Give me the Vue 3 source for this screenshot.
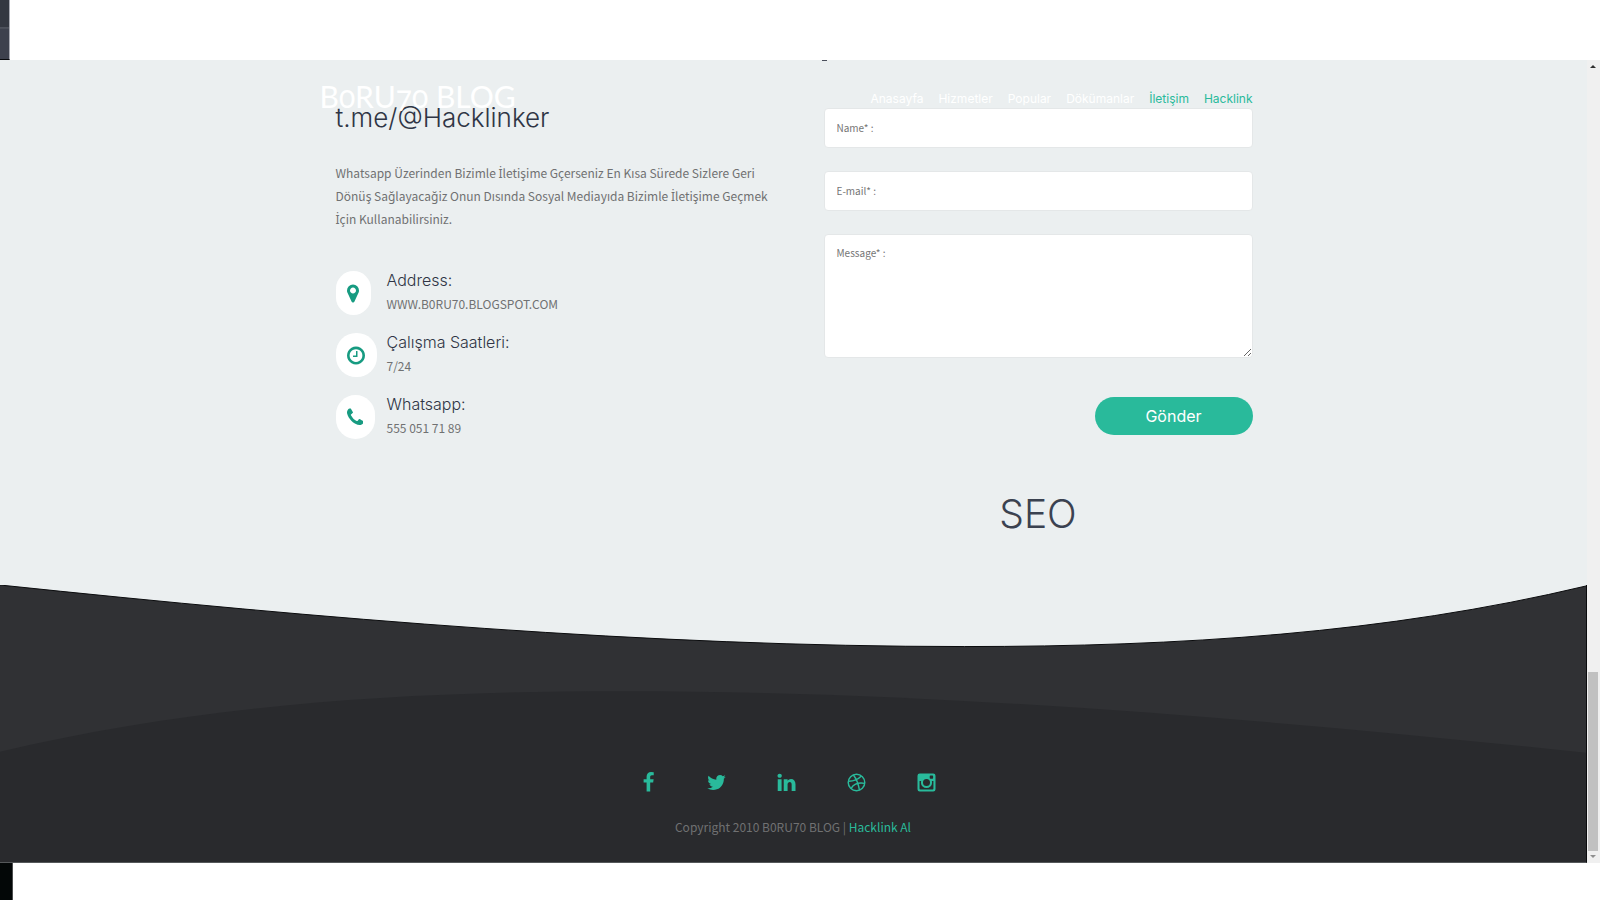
<script setup>
import { ref } from 'vue'

const navLinks = [
  { label: 'Anasayfa' },
  { label: 'Hizmetler' },
  { label: 'Popular' },
  { label: 'Dökümanlar' },
  { label: 'İletişim', accent: true },
  { label: 'Hacklink', accent: true },
]

const contacts = [
  {
    kind: 'marker',
    title: 'Address:',
    text: 'WWW.B0RU70.BLOGSPOT.COM',
    box: '384 0 1024 1792',
    path: 'M1152 640q0-106-75-181t-181-75-181 75-75 181 75 181 181 75 181-75 75-181zm256 0q0 109-33 179l-364 774q-16 33-47.500 52t-67.500 19-67.500-19-46.500-52l-365-774q-33-70-33-179 0-212 150-362t362-150 362 150 150 362z',
  },
  {
    kind: 'clock',
    title: 'Çalışma Saatleri:',
    text: '7/24',
    box: '128 0 1536 1792',
    path: 'M1024 544v448q0 14-9 23t-23 9h-320q-14 0-23-9t-9-23v-64q0-14 9-23t23-9h224v-352q0-14 9-23t23-9h64q14 0 23 9t9 23zm416 352q0-148-73-273t-198-198-273-73-273 73-198 198-73 273 73 273 198 198 273 73 273-73 198-198 73-273zm224 0q0 209-103 385.500t-279.500 279.500-385.500 103-385.500-103-279.500-279.500-103-385.500 103-385.500 279.500-279.500 385.500-103 385.500 103 279.500 279.500 103 385.500z',
  },
  {
    kind: 'phone',
    title: 'Whatsapp:',
    text: '555 051 71 89',
    box: '192 0 1408 1792',
    path: 'M1600 1240q0 27-10 70.500t-21 68.500q-21 50-122 106-94 51-186 51-27 0-52.500-3.500t-57.500-12.500-47.500-14.500-55.500-20.500-49-18q-98-35-175-83-128-79-264.500-215.500t-215.500-264.500q-48-77-83-175-3-9-18-49t-20.500-55.500-14.500-47.500-12.500-57.500-3.500-52.500q0-92 51-186 56-101 106-122 25-11 68.500-21t70.500-10q14 0 21 3 18 6 53 76 11 19 30 54t35 63.500 31 53.500q3 4 17.500 25t21.500 35.500 7 28.500q0 20-28.500 50t-62 55-62 53-28.500 46q0 9 5 22.500t8.500 20.500 14 24 11.500 19q76 137 174 235t235 174q2 1 19 11.500t24 14 20.500 8.500 22.500 5q18 0 46-28.500t53-62 55-62 50-28.500q14 0 28.500 7t35.500 21.500 25 17.500q25 15 53.500 31t63.500 35 54 30q70 35 76 53 3 7 3 21z',
  },
]

const name = ref('')
const email = ref('')
const message = ref('')
</script>

<template>
  <div class="desktop">
    <div class="strip strip-top"><span class="window-edge"></span></div>
    <div class="browser">
      <div class="page">
        <header class="header">
          <div class="container header-row">
            <a class="brand" href="#">B0RU70 BLOG</a>
            <nav class="nav">
              <a v-for="l in navLinks" :key="l.label" href="#" :class="{ accent: l.accent }">{{ l.label }}</a>
            </nav>
          </div>
        </header>
        <span class="cut-mark"></span>

        <main class="main">
          <div class="container columns">
            <section class="info">
              <h2>t.me/@Hacklinker</h2>
              <p class="lead">
                Whatsapp Üzerinden Bizimle <span class="dotted">İ</span>letişime Gçerseniz En Kısa Sürede Sizlere Geri
                Dönüş Sağlayacağiz Onun Dısında Sosyal Mediayıda Bizimle <span class="dotted">İ</span>letişime Geçmek
                <span class="dotted">İ</span>çin Kullanabilirsiniz.
              </p>
              <ul class="contacts">
                <li v-for="c in contacts" :key="c.kind">
                  <div class="slot">
                    <span class="pill" :class="c.kind">
                      <svg :viewBox="c.box" aria-hidden="true"><path :d="c.path" /></svg>
                    </span>
                  </div>
                  <div>
                    <h3>{{ c.title }}</h3>
                    <p>{{ c.text }}</p>
                  </div>
                </li>
              </ul>
            </section>

            <section class="contact">
              <form class="form" @submit.prevent>
                <input v-model="name" type="text" placeholder="Name* :" aria-label="Name" />
                <input v-model="email" type="email" placeholder="E-mail* :" aria-label="E-mail" />
                <textarea v-model="message" placeholder="Message* :" aria-label="Message"></textarea>
                <button type="submit">Gönder</button>
              </form>
              <h1>SEO</h1>
            </section>
          </div>
        </main>

        <footer class="footer">
          <svg class="waves" viewBox="0 0 1587 279" preserveAspectRatio="none" aria-hidden="true">
            <path
              d="M0 0C322 34 650 62 965 62C1180 62 1387 49 1587 1V279H0Z"
              fill="#303134"
            />
            <path d="M0 168C200 120 407 107 622 107C937 107 1265 135 1587 169V279H0Z" fill="#292a2d" />
            <path
              d="M0 0C322 34 650 62 965 62C1180 62 1387 49 1587 1"
              fill="none"
              stroke="#0a0b0d"
              vector-effect="non-scaling-stroke"
            />
          </svg>
          <div class="social">
            <a href="#" aria-label="Facebook">
              <svg class="slim" viewBox="192 0 1408 1792"><path d="M1343 12v264h-157q-86 0-116 36t-30 108v189h293l-39 296h-254v759h-306v-759h-255v-296h255v-218q0-186 104-288.500t277-102.500q147 0 228 12z" /></svg>
            </a>
            <a href="#" aria-label="Twitter">
              <svg viewBox="0 0 1792 1792"><path d="M1684 408q-67 98-162 167 1 14 1 42 0 130-38 259.500t-115.500 248.500-184.500 210.500-258 146-323 54.500q-271 0-496-145 35 4 78 4 225 0 401-138-105-2-188-64.500t-114-159.500q33 5 61 5 43 0 85-11-112-23-185.500-111.500t-73.500-205.500v-4q68 38 146 41-66-44-105-115t-39-154q0-88 44-163 121 149 294.500 238.500t371.500 99.500q-8-38-8-74 0-134 94.500-228.500t228.500-94.500q140 0 236 102 109-21 205-78-37 115-142 178 93-10 186-50z" /></svg>
            </a>
            <a href="#" aria-label="LinkedIn">
              <svg viewBox="0 0 1792 1792"><path d="M477 625v991h-330v-991h330zm21-306q1 73-50.500 122t-135.500 49h-2q-82 0-132-49t-50-122q0-74 51.500-122.500t134.500-48.500 133 48.500 51 122.500zm1166 729v568h-329v-530q0-105-40.500-164.500t-126.500-59.500q-63 0-105.500 34.500t-63.500 85.500q-11 30-11 81v553h-329q2-399 2-647t-1-296l-1-48h329v144h-2q20-32 41-56t56.500-52 87-43.500 114.500-15.500q171 0 275 113.500t104 332.500z" /></svg>
            </a>
            <a href="#" aria-label="Dribbble">
              <svg viewBox="0 0 1792 1792">
                <g class="lines">
                  <circle cx="896" cy="896" r="706" />
                  <path d="M630 250Q1010 720 1150 1550M200 790Q880 800 1310 350M430 1410Q760 830 1600 970" />
                </g>
              </svg>
            </a>
            <a href="#" aria-label="Instagram">
              <svg viewBox="0 0 1792 1792">
                <path
                  fill-rule="evenodd"
                  d="M318 128H1474Q1664 128 1664 318V1474Q1664 1664 1474 1664H318Q128 1664 128 1474V318Q128 128 318 128ZM1230 300Q1170 300 1170 360V520Q1170 580 1230 580H1400Q1460 580 1460 520V360Q1460 300 1400 300ZM302 776V1425Q302 1486 363 1486H1425Q1486 1486 1486 1425V776H1350Q1370 840 1370 908A474 460 0 0 1 422 908Q422 840 442 776ZM896 592A300 300 0 1 0 896 1192A300 300 0 1 0 896 592Z"
                />
              </svg>
            </a>
          </div>
          <p class="copyright">Copyright 2010 B0RU70 BLOG | <a href="#">Hacklink Al</a></p>
        </footer>
      </div>

      <div class="scrollbar" aria-hidden="true">
        <svg viewBox="0 0 13 12"><path d="M3 8L6 5L9 8Z" fill="#303030" /></svg>
        <div class="track"><span class="thumb"></span></div>
        <svg viewBox="0 0 13 12"><path d="M3 4L6 7L9 4Z" fill="#8f8f8f" /></svg>
      </div>
    </div>
    <div class="strip strip-bottom"><span class="window-edge"></span></div>
  </div>
</template>

<style>
body {
  margin: 0;
}
</style>

<style scoped>
* {
  box-sizing: border-box;
}
h1,
h2,
h3,
p,
ul {
  margin: 0;
  padding: 0;
  font-weight: 400;
}
a {
  text-decoration: none;
}
.desktop {
  min-height: 100vh;
  display: flex;
  flex-direction: column;
  background: #fff;
  font-family: "Noto Sans CJK SC", "Noto Sans", sans-serif;
  color: #707172;
}
.strip {
  display: flex;
}
.strip-top {
  height: 60px;
}
.strip-bottom {
  height: 37px;
}
.strip-top .window-edge {
  width: 10px;
  border-right: 1px solid #a9abb3;
  border-bottom: 1px solid #08090c;
  background: linear-gradient(#343841 27px, #50545e 27px, #484c56 29px, #3d414d 29px);
}
.strip-bottom .window-edge {
  width: 13px;
  border-right: 1px solid #4b4d4e;
  background: #030707;
}
.browser {
  flex: 1;
  display: flex;
}
.page {
  flex: 1;
  position: relative;
  display: flex;
  flex-direction: column;
  background: #ebeff0;
}
.container {
  width: 100%;
  max-width: 948px;
  margin: 0 auto;
}
.header {
  position: absolute;
  top: 16px;
  left: 0;
  right: 0;
}
.header-row {
  display: flex;
  align-items: center;
  justify-content: space-between;
  padding-right: 15px;
}
.brand {
  font-family: Lato, sans-serif;
  font-size: 30px;
  line-height: 40px;
  font-variant-numeric: oldstyle-nums;
  color: #fff;
}
.nav {
  display: flex;
  gap: 15px;
  margin-top: 6px;
  font-family: Inter, sans-serif;
  font-size: 12px;
  line-height: 20px;
}
.nav a {
  color: #fff;
}
.nav .accent {
  color: #29ba9b;
}
.cut-mark {
  position: absolute;
  top: 0;
  left: calc(50% + 28px);
  width: 5px;
  height: 1px;
  background: #4a4f5c;
}
.main {
  flex: 1;
}
.columns {
  display: grid;
  grid-template-columns: 1fr 1fr;
}
.info {
  padding: 43px 16px 0;
}
.info h2 {
  font-family: Inter, sans-serif;
  font-weight: 300;
  font-size: 26px;
  line-height: 30px;
  color: #2f3545;
}
.lead {
  margin-top: 28px;
  font-size: 12px;
  line-height: 23px;
}
.dotted {
  font-family: "Noto Sans", sans-serif;
  line-height: 1;
}
.contacts {
  margin-top: 41px;
  display: grid;
  gap: 14px;
  list-style: none;
}
.contacts li {
  display: flex;
}
.slot {
  width: 51px;
}
.pill {
  height: 44px;
  display: flex;
  align-items: center;
  justify-content: center;
  border-radius: 20px;
  background: #fff;
}
.pill svg {
  height: 21px;
  fill: #179b81;
}
.marker {
  width: 35px;
}
.clock {
  width: 41px;
}
.phone {
  width: 39px;
}
.contacts h3 {
  font-family: Inter, sans-serif;
  font-weight: 300;
  font-size: 16px;
  line-height: 18px;
  color: #2f3545;
}
.contacts p {
  font-size: 12px;
  line-height: 30px;
}
.contact {
  padding: 48px 15px 0 30px;
}
.form {
  display: flex;
  flex-direction: column;
  gap: 23px;
}
.form input,
.form textarea {
  width: 100%;
  margin: 0;
  border: 1px solid #e4e7e8;
  border-radius: 4px;
  outline: 0;
  background: #fff;
  font-family: inherit;
  font-size: 10px;
  color: #555;
}
.form input {
  height: 40px;
  padding: 0 12px 2px;
}
.form textarea {
  height: 124px;
  padding: 9px 12px;
  line-height: 18px;
  resize: vertical;
}
.form ::placeholder {
  color: #757575;
}
.form button {
  align-self: flex-end;
  width: 158px;
  height: 38px;
  margin-top: 16px;
  padding: 0;
  border: 0;
  border-radius: 20px;
  background: #29ba9b;
  font-family: Inter, sans-serif;
  font-size: 16px;
  color: #fff;
}
.contact h1 {
  margin-top: 54px;
  text-align: center;
  font-family: Inter, sans-serif;
  font-weight: 300;
  font-size: 39px;
  line-height: 50px;
  color: #3b4250;
}
.footer {
  position: relative;
  padding: 187px 0 23px;
  border-right: 1px solid #0a0b0d;
  border-bottom: 1px solid #55585a;
}
.waves {
  position: absolute;
  inset: 0;
  width: 100%;
  height: 100%;
}
.social {
  position: relative;
  display: flex;
  justify-content: center;
  gap: 49px;
  padding-right: 10px;
}
.social a {
  display: flex;
}
.social svg {
  width: 21px;
  height: 21px;
  fill: #29ba9b;
}
.social .slim {
  width: 17px;
}
.social .lines {
  fill: none;
  stroke: #29ba9b;
  stroke-width: 124;
}
.copyright {
  position: relative;
  margin-top: 22px;
  text-align: center;
  font-size: 12px;
  line-height: 24px;
}
.copyright a {
  color: #29ba9b;
}
.scrollbar {
  width: 13px;
  display: flex;
  flex-direction: column;
  background: #f0f0f0;
}
.scrollbar svg {
  width: 13px;
  height: 12px;
}
.track {
  flex: 1;
  display: flex;
  flex-direction: column;
  justify-content: flex-end;
  padding: 0 2px 0 1px;
}
.thumb {
  height: 23%;
  background: #c1c1c1;
}
</style>
